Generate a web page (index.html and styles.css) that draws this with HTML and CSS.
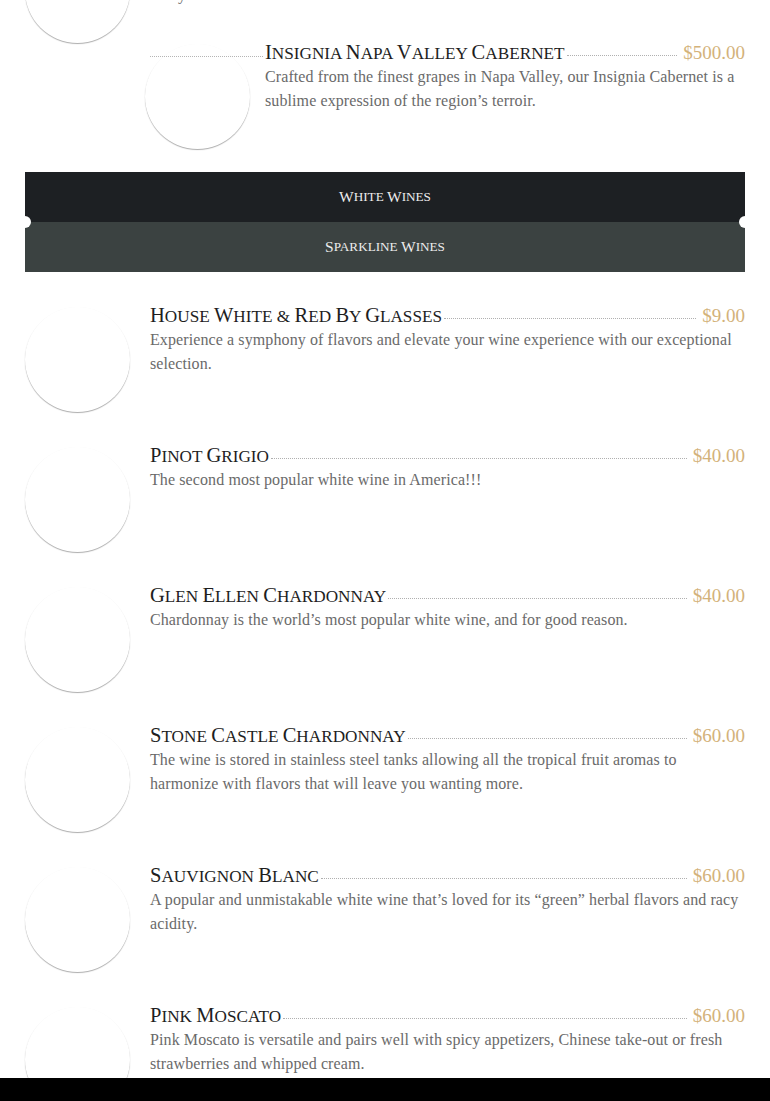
FILE: index.html
```html
<!DOCTYPE html>
<html lang="en">
<head>
<meta charset="utf-8">
<title>Wine Menu</title>
<link rel="stylesheet" href="styles.css">
</head>
<body>
<main class="menu">
  <section class="list list--top">
    <article class="item item--clipped">
      <div class="thumb"></div>
      <div class="info">
        <div class="head"><h3 class="name"><span class="ini">H</span>ouse <span class="ini">C</span>abernet <span class="ini">S</span>auvignon</h3><span class="dots"></span><span class="price">$12.00</span></div>
        <p class="desc">A rich, full-bodied red crafted from carefully selected grapes grown in sun-drenched vineyards.</p>
      </div>
    </article>
    <article class="item item--indent">
      <div class="thumb"></div>
      <div class="info">
        <div class="head"><h3 class="name"><span class="ini">I</span>nsignia <span class="ini">N</span>apa <span class="ini">V</span>alley <span class="ini">C</span>abernet</h3><span class="dots"></span><span class="price">$500.00</span></div>
        <p class="desc">Crafted from the finest grapes in Napa Valley, our Insignia Cabernet is a sublime expression of the region’s terroir.</p>
      </div>
    </article>
  </section>

  <nav class="tabs">
    <a class="tab tab--active"><span class="ini">W</span>hite <span class="ini">W</span>ines</a>
    <a class="tab tab--alt"><span class="ini">S</span>parkline <span class="ini">W</span>ines</a>
  </nav>

  <section class="list">
    <article class="item">
      <div class="thumb"></div>
      <div class="info">
        <div class="head"><h3 class="name"><span class="ini">H</span>ouse <span class="ini">W</span>hite &amp; <span class="ini">R</span>ed <span class="ini">B</span>y <span class="ini">G</span>lasses</h3><span class="dots"></span><span class="price">$9.00</span></div>
        <p class="desc">Experience a symphony of flavors and elevate your wine experience with our exceptional selection.</p>
      </div>
    </article>
    <article class="item">
      <div class="thumb"></div>
      <div class="info">
        <div class="head"><h3 class="name"><span class="ini">P</span>inot <span class="ini">G</span>rigio</h3><span class="dots"></span><span class="price">$40.00</span></div>
        <p class="desc">The second most popular white wine in America!!!</p>
      </div>
    </article>
    <article class="item">
      <div class="thumb"></div>
      <div class="info">
        <div class="head"><h3 class="name"><span class="ini">G</span>len <span class="ini">E</span>llen <span class="ini">C</span>hardonnay</h3><span class="dots"></span><span class="price">$40.00</span></div>
        <p class="desc">Chardonnay is the world’s most popular white wine, and for good reason.</p>
      </div>
    </article>
    <article class="item">
      <div class="thumb"></div>
      <div class="info">
        <div class="head"><h3 class="name"><span class="ini">S</span>tone <span class="ini">C</span>astle <span class="ini">C</span>hardonnay</h3><span class="dots"></span><span class="price">$60.00</span></div>
        <p class="desc">The wine is stored in stainless steel tanks allowing all the tropical fruit aromas to harmonize with flavors that will leave you wanting more.</p>
      </div>
    </article>
    <article class="item">
      <div class="thumb"></div>
      <div class="info">
        <div class="head"><h3 class="name"><span class="ini">S</span>auvignon <span class="ini">B</span>lanc</h3><span class="dots"></span><span class="price">$60.00</span></div>
        <p class="desc">A popular and unmistakable white wine that’s loved for its “green” herbal flavors and racy acidity.</p>
      </div>
    </article>
    <article class="item">
      <div class="thumb"></div>
      <div class="info">
        <div class="head"><h3 class="name"><span class="ini">P</span>ink <span class="ini">M</span>oscato</h3><span class="dots"></span><span class="price">$60.00</span></div>
        <p class="desc">Pink Moscato is versatile and pairs well with spicy appetizers, Chinese take-out or fresh strawberries and whipped cream.</p>
      </div>
    </article>
  </section>
</main>
<div class="footer-bar"></div>
</body>
</html>
```
FILE: styles.css
```css
* { box-sizing: border-box; }

html, body {
  margin: 0;
  padding: 0;
  background: #fff;
  overflow: hidden;
}

body {
  font-family: "Liberation Serif", "Times New Roman", serif;
  color: #222;
}

.menu {
  margin-top: -69px;
  padding: 0 25px;
}

.list {
  display: flex;
  flex-direction: column;
}

.tabs + .list {
  margin-top: 28px;
}

.item {
  position: relative;
  display: flex;
  gap: 20px;
  height: 140px;
}

.item--clipped { height: 106px; }

.item--indent {
  margin-left: 120px;
  gap: 15px;
  height: 135px;
}

.item--indent::before {
  content: "";
  position: absolute;
  left: 5px;
  top: 19px;
  width: 113px;
  border-top: 1px dotted #b5b5b5;
  z-index: 2;
}

.thumb {
  flex: 0 0 105px;
  width: 105px;
  height: 105px;
  margin-top: 7px;
  border-radius: 50%;
  background: #fff;
  box-shadow: 0 1px 1px rgba(0, 0, 0, 0.33);
}

.info {
  flex: 1;
  min-width: 0;
  padding-top: 3px;
}

.head {
  display: flex;
  align-items: baseline;
  line-height: 24px;
}

.name {
  margin: 0;
  font-weight: 400;
  font-size: 17.2px;
  text-transform: uppercase;
  color: #1e1e1e;
  white-space: nowrap;
}

.name .ini { font-size: 20.5px; }

.dots {
  flex: 1;
  margin: 0 6px 0 2px;
  border-bottom: 1px dotted #b0b0b0;
  transform: translateY(-3px);
}

.price {
  font-size: 19px;
  color: #d3b27a;
  white-space: nowrap;
}

.desc {
  margin: -1px 0 0;
  font-size: 16px;
  line-height: 24px;
  letter-spacing: 0.1px;
  color: #6a6a6a;
}

.tabs {
  position: relative;
  display: flex;
  flex-direction: column;
}

.tabs::before,
.tabs::after {
  content: "";
  position: absolute;
  top: 44px;
  width: 12px;
  height: 12px;
  border-radius: 50%;
  background: #fff;
}

.tabs::before { left: -6px; }
.tabs::after { right: -6px; }

.tab {
  display: flex;
  align-items: center;
  justify-content: center;
  height: 50px;
  font-size: 13.2px;
  text-transform: uppercase;
  color: #ececec;
  background: #1d2023;
  white-space: pre;
}

.tab .ini { font-size: 15.5px; }

.tab--alt { background: #3b4241; }

.footer-bar {
  position: fixed;
  left: 0;
  right: 0;
  bottom: 0;
  height: 23px;
  background: #000;
}
```
